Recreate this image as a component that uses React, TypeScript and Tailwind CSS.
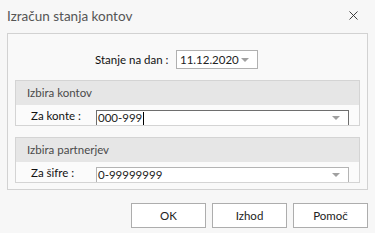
import { X } from "lucide-react";

const font = { fontFamily: 'Lato, "Open Sans", sans-serif' };

function Caret() {
  return (
    <svg width="8" height="4" viewBox="0 0 8 4" className="shrink-0">
      <path d="M0 0h8L4 4z" fill="#a0a0a0" />
    </svg>
  );
}

function Group({
  title,
  label,
  value,
  focused,
}: {
  title: string;
  label: string;
  value: string;
  focused?: boolean;
}) {
  return (
    <div className="border border-[#d4d4d4] bg-[#fbfbfb]">
      <div className="flex h-[24px] items-center bg-[#e6e6e6] pl-[11px] text-[11.5px] text-[#4a4a4a]">
        {title}
      </div>
      <div className="flex h-[20px] items-end pl-[15px]">
        <span className="mb-[1px] w-[65px] text-[11.5px] leading-[16px] text-[#111]">{label}</span>
        <div
          className={`flex h-[15px] w-[253px] items-center justify-between border border-b-0 bg-white pl-[1px] pr-[8px] text-[11.5px] leading-[14px] text-[#222] ${
            focused ? "border-[#6e6e6e]" : "border-[#b4b4b4]"
          }`}
        >
          <span className="flex items-center">
            {value}
            {focused && <span className="ml-[1px] h-[13px] w-[1px] bg-black" />}
          </span>
          <Caret />
        </div>
      </div>
    </div>
  );
}

export default function App() {
  return (
    <div className="flex h-[233px] w-[375px] flex-col bg-[#f7f7f7]" style={font}>
      <div className="flex h-[33px] items-start justify-between pl-[7px] pr-[14px] pt-[6px]">
        <span className="text-[13.5px] text-[#555]">Izračun stanja kontov</span>
        <X className="mt-[2px] size-[15px] text-[#333]" strokeWidth={1.5} />
      </div>

      <div className="mx-[7px] flex h-[157px] w-[361px] flex-col border border-[#d2d2d2] bg-[#f9f9f9] px-[7px] pt-[16px]">
        <div className="flex h-[19px] items-center pl-[80px]">
          <span className="w-[81px] whitespace-nowrap text-[11.5px] text-[#111]">Stanje na dan :</span>
          <div className="flex h-[19px] w-[82px] items-center justify-between whitespace-nowrap border border-[#b0b0b0] bg-white pl-[3px] pr-[8px] text-[11.5px] text-[#222]">
            11.12.2020
            <Caret />
          </div>
        </div>
        <div className="mt-[11px] flex flex-col gap-[11px]">
          <Group title="Izbira kontov" label="Za konte :" value="000-999" focused />
          <Group title="Izbira partnerjev" label="Za šifre :" value="0-99999999" />
        </div>
      </div>

      <div className="mt-[13px] flex justify-end gap-[6px] pr-[7px]">
        {["OK", "Izhod", "Pomoč"].map((b) => (
          <button
            key={b}
            type="button"
            className="h-[25px] w-[75px] border border-[#adadad] bg-white text-[11.5px] text-[#222]"
          >
            {b}
          </button>
        ))}
      </div>
    </div>
  );
}
